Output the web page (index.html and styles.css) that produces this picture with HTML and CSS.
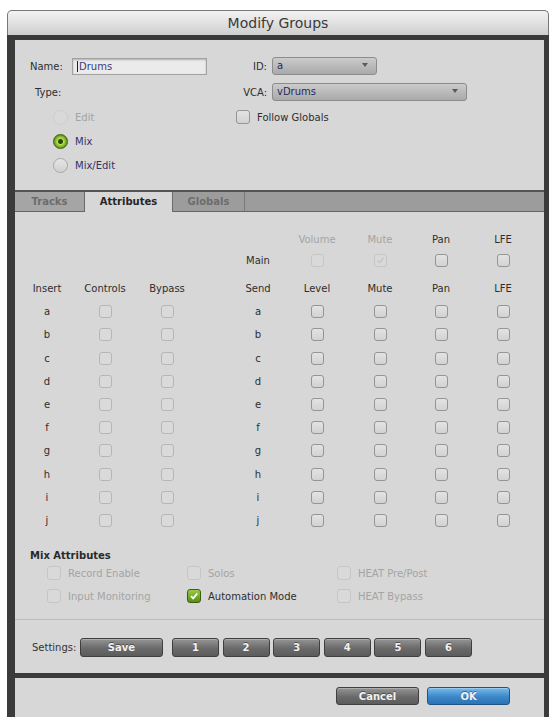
FILE: index.html
```html
<!DOCTYPE html>
<html lang="en">
<head>
    <meta charset="UTF-8">
    <meta name="viewport" content="width=device-width, initial-scale=1.0">
    <title>Modify Groups</title>
    <link rel="stylesheet" href="styles.css">
</head>
<body>
    <div class="window">
        <div class="titlebar">Modify Groups</div>
        <div class="frame">
            <div class="panel">
                <div class="general">
                    <div class="col-left">
                        <div class="row"><span class="lbl">Name:</span><div class="textbox"><span class="caret"></span>Drums</div></div>
                        <div class="row"><span class="type-lbl">Type:</span></div>
                        <div class="row radio-row disabled"><span class="radio"></span>Edit</div>
                        <div class="row radio-row"><span class="radio on"></span>Mix</div>
                        <div class="row radio-row"><span class="radio"></span>Mix/Edit</div>
                    </div>
                    <div class="col-right">
                        <div class="row"><span class="rlbl">ID:</span><div class="popup popup-id">a</div></div>
                        <div class="row"><span class="rlbl">VCA:</span><div class="popup popup-vca">vDrums</div></div>
                        <div class="row check-row"><span class="cb"></span>Follow Globals</div>
                    </div>
                </div>

                <div class="tabs">
                    <div class="tab tab-tracks">Tracks</div>
                    <div class="tab active">Attributes</div>
                    <div class="tab tab-globals">Globals</div>
                    <div class="tab-fill"></div>
                </div>

                <div class="attrs">
                    <div class="grow top-labels"><span class="off first">Volume</span><span class="off">Mute</span><span>Pan</span><span>LFE</span></div>
                    <div class="grow main-row"><span class="main-lbl">Main</span><i class="cb off"></i><i class="cb off"><svg viewBox="0 0 13 13"><path d="M3 6.5 L5.5 9 L10 3.5" fill="none" stroke="#c2c2c2" stroke-width="1.4"/></svg></i><i class="cb"></i><i class="cb"></i></div>
                    <div class="grow line head"><span>Insert</span><span>Controls</span><span>Bypass</span><span>Send</span><span>Level</span><span>Mute</span><span>Pan</span><span>LFE</span></div>
                    <div class="grow line"><span>a</span><i class="cb dim"></i><i class="cb dim"></i><span>a</span><i class="cb"></i><i class="cb"></i><i class="cb"></i><i class="cb"></i></div>
                    <div class="grow line"><span>b</span><i class="cb dim"></i><i class="cb dim"></i><span>b</span><i class="cb"></i><i class="cb"></i><i class="cb"></i><i class="cb"></i></div>
                    <div class="grow line"><span>c</span><i class="cb dim"></i><i class="cb dim"></i><span>c</span><i class="cb"></i><i class="cb"></i><i class="cb"></i><i class="cb"></i></div>
                    <div class="grow line"><span>d</span><i class="cb dim"></i><i class="cb dim"></i><span>d</span><i class="cb"></i><i class="cb"></i><i class="cb"></i><i class="cb"></i></div>
                    <div class="grow line"><span>e</span><i class="cb dim"></i><i class="cb dim"></i><span>e</span><i class="cb"></i><i class="cb"></i><i class="cb"></i><i class="cb"></i></div>
                    <div class="grow line"><span>f</span><i class="cb dim"></i><i class="cb dim"></i><span>f</span><i class="cb"></i><i class="cb"></i><i class="cb"></i><i class="cb"></i></div>
                    <div class="grow line"><span>g</span><i class="cb dim"></i><i class="cb dim"></i><span>g</span><i class="cb"></i><i class="cb"></i><i class="cb"></i><i class="cb"></i></div>
                    <div class="grow line"><span>h</span><i class="cb dim"></i><i class="cb dim"></i><span>h</span><i class="cb"></i><i class="cb"></i><i class="cb"></i><i class="cb"></i></div>
                    <div class="grow line"><span>i</span><i class="cb dim"></i><i class="cb dim"></i><span>i</span><i class="cb"></i><i class="cb"></i><i class="cb"></i><i class="cb"></i></div>
                    <div class="grow line"><span>j</span><i class="cb dim"></i><i class="cb dim"></i><span>j</span><i class="cb"></i><i class="cb"></i><i class="cb"></i><i class="cb"></i></div>

                    <div class="mix-title">Mix Attributes</div>
                    <div class="mix">
                        <div class="mix-item off"><i class="cb off"></i>Record Enable</div>
                        <div class="mix-item off"><i class="cb off"></i>Solos</div>
                        <div class="mix-item off"><i class="cb off"></i>HEAT Pre/Post</div>
                        <div class="mix-item off"><i class="cb off"></i>Input Monitoring</div>
                        <div class="mix-item"><i class="cb green"><svg viewBox="0 0 14 14"><path d="M3.5 7.2 L6 9.8 L10.8 4" fill="none" stroke="#fff" stroke-width="2"/></svg></i>Automation Mode</div>
                        <div class="mix-item off"><i class="cb off"></i>HEAT Bypass</div>
                    </div>
                </div>

                <div class="settings">
                    <span class="settings-lbl">Settings:</span>
                    <button class="btn btn-save">Save</button>
                    <div class="slots">
                        <button class="btn slot">1</button>
                        <button class="btn slot">2</button>
                        <button class="btn slot">3</button>
                        <button class="btn slot">4</button>
                        <button class="btn slot">5</button>
                        <button class="btn slot">6</button>
                    </div>
                </div>
            </div>
            <div class="footer">
                <button class="btn btn-wide">Cancel</button>
                <button class="btn btn-wide btn-ok">OK</button>
            </div>
        </div>
    </div>
</body>
</html>
```

FILE: styles.css
```css
* { box-sizing: border-box; }
body { margin: 0; background: #fff; font-family: "DejaVu Sans", sans-serif; font-size: 10px; color: #2e2e2e; overflow: hidden; }

.window { margin: 10px 0 0 7px; width: 542px; }
.titlebar { height: 25px; line-height: 24px; text-align: center; font-size: 14px; color: #3a3a3a; background: linear-gradient(#f3f3f3, #cfcfcf); border: 1px solid #777; border-bottom: none; border-radius: 5px 5px 0 0; }
.frame { background: #3b3b3b; padding: 5px 5px 0 8px; height: 690px; }
.panel { background: #d7d7d7; }

/* top part */
.general { display: flex; height: 150px; padding: 13px 0 0 15px; }
.col-left { width: 206px; }
.row { display: flex; align-items: center; height: 26px; }
.radio-row, .check-row { height: 24px; }
.lbl { width: 42px; }
.type-lbl { margin-left: 5px; }
.textbox { width: 135px; height: 17px; background: #ebebeb; border: 1px solid #a2a2a2; box-shadow: inset 0 1px 2px rgba(0,0,0,0.25); padding-left: 4px; line-height: 15px; color: #3a3a7a; display: flex; align-items: center; }
.caret { width: 1px; height: 11px; background: #222; margin-right: 1px; }
.radio-row { padding-left: 23px; }
.radio { width: 15px; height: 15px; border-radius: 50%; border: 1px solid #a8a8a8; background: linear-gradient(#e6e6e6, #d0d0d0); margin-right: 7px; }
.radio.on { border-color: #435e10; background: radial-gradient(circle, #2e4606 0 2px, #b4e252 3px, #83b82a 5px, #5b8517 7px); }
.disabled { color: #a3a3a3; }
.disabled .radio { border-color: #cdcdcd; background: #d9d9d9; }
.radio-row:not(.disabled) { color: #33336a; }

.rlbl { width: 31px; text-align: right; margin-right: 5px; }
.popup { position: relative; height: 18px; border: 1px solid #8c8c8c; border-radius: 3px; background: linear-gradient(#cbcbcb, #a9a9a9); padding-left: 4px; line-height: 16px; color: #2a2a5a; }
.popup::after { content: ""; position: absolute; right: 8px; top: 5px; border-left: 3.5px solid transparent; border-right: 3.5px solid transparent; border-top: 4px solid #5a5a5a; }
.popup-id { width: 105px; }
.popup-vca { width: 195px; }
.check-row .cb { width: 14px; height: 14px; margin-right: 7px; }

/* tabs */
.tabs { display: flex; height: 22px; border-top: 2px solid #555; background: #9c9c9c; font-weight: bold; }
.tab { height: 20px; line-height: 19px; text-align: center; border-bottom: 1px solid #666; color: #6c6c6c; }
.tab-tracks { width: 70px; background: #a5a5a5; border-right: 1px solid #6a6a6a; }
.active { width: 87px; background: #d7d7d7; border-bottom-color: #d7d7d7; color: #262626; }
.tab-globals { width: 73px; border-left: 1px solid #6a6a6a; border-right: 1px solid #7a7a7a; }
.tab-fill { flex: 1; border-bottom: 1px solid #666; }

/* attribute grid */
.attrs { padding-top: 17px; border-bottom: 1px solid #bcbcbc; padding-bottom: 15px; }
.grow { display: grid; grid-template-columns: 64px 52px 72px 22px 66px 52px 74px 48px 76px; justify-items: center; align-items: center; height: 23.2px; }
.line > :nth-child(4) { grid-column: 5; }
.top-labels, .main-row { height: 21px; }
.top-labels .first { grid-column: 6; }
.main-row { margin-bottom: 6px; }
.main-row .main-lbl { grid-column: 5; }
.off { color: #a4a4a4; }

.cb { display: block; width: 13px; height: 13px; border: 1px solid #959595; border-radius: 3px; background: linear-gradient(#e3e3e3, #d2d2d2); }
.cb svg { display: block; width: 100%; height: 100%; }
.cb.dim { border-color: #b6b6b6; background: #dadada; }
.cb.off { border-color: #c6c6c6; background: #d9d9d9; }
.cb.green { border-color: #3e5c0e; background: linear-gradient(#98cc45, #5c8c17); }

.mix-title { margin: 17px 0 0 15px; line-height: 14px; font-weight: bold; color: #2a2a2a; }
.mix { display: grid; grid-template-columns: 140px 150px 1fr; row-gap: 7px; margin-top: 2px; padding-left: 32px; }
.mix-item { display: flex; align-items: center; height: 16px; }
.mix-item .cb { width: 14px; height: 14px; margin-right: 7px; }

/* settings + footer */
.settings { display: flex; align-items: center; height: 53px; padding: 2px 0 0 17px; }
.settings-lbl { width: 48px; color: #333; }
.slots { display: flex; gap: 3.6px; margin-left: 9px; }
.btn { height: 19px; border: 1px solid #3f3f3f; border-radius: 3px; background: linear-gradient(#959595, #6a6a6a 55%, #5c5c5c); color: #f2f2f2; font-family: "DejaVu Sans", sans-serif; font-size: 10px; font-weight: bold; padding: 0; text-shadow: 0 -1px 0 rgba(0,0,0,0.4); box-shadow: inset 0 1px 0 rgba(255,255,255,0.25); }
.btn-save { width: 83px; }
.slot { width: 47px; }
.footer { display: flex; justify-content: flex-end; gap: 8px; margin-top: 5px; height: 60px; padding: 9px 34px 0 0; background: #d7d7d7; }
.btn-wide { width: 83px; height: 18px; }
.btn-ok { border-color: #1f5582; background: linear-gradient(#78bbec, #3a87c8 55%, #2b73b4); }
```
